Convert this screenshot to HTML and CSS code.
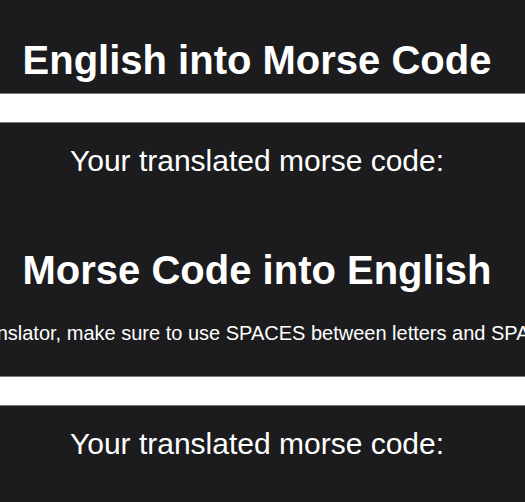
FILE: index.html
```html
<!DOCTYPE html>
<html lang="en">
<head>
<meta charset="utf-8">
<title>Morse Code Translator</title>
<link rel="stylesheet" href="styles.css">
</head>
<body>
  <section class="translator">
    <h1 class="title">English into Morse Code</h1>
    <input class="field" type="text">
    <p class="result">Your translated morse code:</p>
  </section>
  <section class="translator">
    <h1 class="title">Morse Code into English</h1>
    <p class="hint">When you use this translator, make sure to use SPACES between letters and SPACES between words</p>
    <input class="field" type="text">
    <p class="result">Your translated morse code:</p>
  </section>
</body>
</html>
```

FILE: styles.css
```css
html, body {
  margin: 0;
  padding: 0;
  background: #1c1c1e;
}
body {
  font-family: "Liberation Sans", Arial, sans-serif;
  color: #ffffff;
  display: flex;
  flex-direction: column;
  align-items: center;
  padding-right: 11px;
  overflow: hidden;
}
.translator {
  display: flex;
  flex-direction: column;
  align-items: center;
}
.title {
  font-size: 40px;
  line-height: 46px;
  font-weight: bold;
  margin: 37px 0 10px;
  white-space: nowrap;
}
.field {
  width: 580px;
  height: 30px;
  box-sizing: border-box;
  margin: 0;
  border: none;
  border-top: 1px solid #7a7a7a;
  border-bottom: 1px solid #7a7a7a;
  background: #ffffff;
}
.result {
  font-size: 30px;
  line-height: 34px;
  margin: 21px 0 32px;
  white-space: nowrap;
}
.hint {
  font-size: 20px;
  line-height: 23px;
  white-space: nowrap;
  margin: 19px 0 31px;
}
```
